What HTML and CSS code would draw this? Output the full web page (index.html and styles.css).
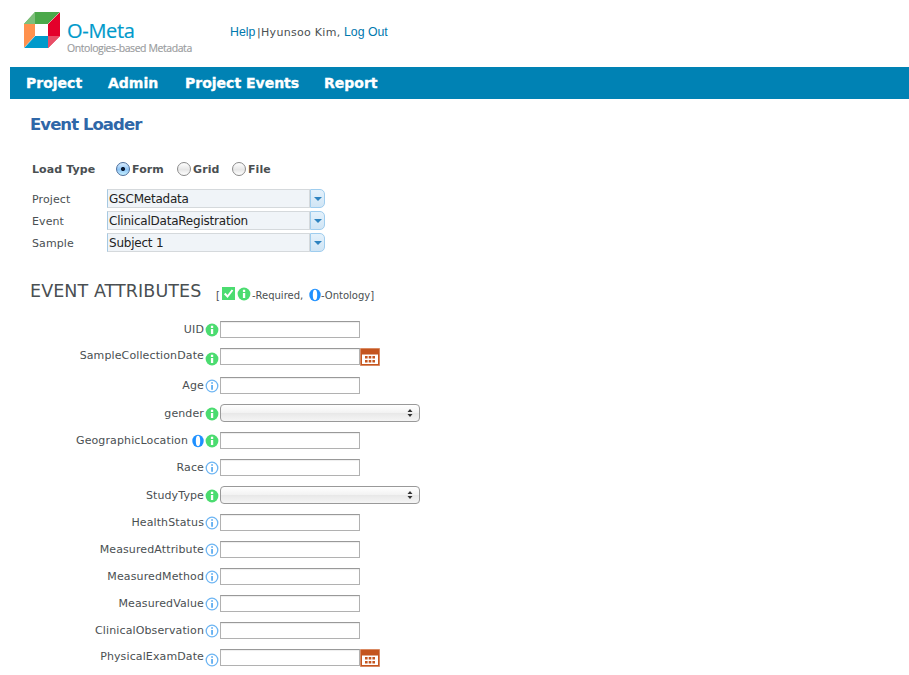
FILE: index.html
```html
<!DOCTYPE html>
<html lang="en">
<head>
<meta charset="utf-8">
<title>O-Meta Event Loader</title>
<link rel="stylesheet" href="styles.css">
</head>
<body>
<svg class="defs" aria-hidden="true">
  <symbol id="req" viewBox="0 0 14 14"><circle cx="7" cy="7" r="6.4" fill="#4bdc70"/><path d="M5.9 2.8h2.3v2.1H5.9zM5.9 6h2.3v5H5.9z" fill="#fff"/></symbol>
  <symbol id="opt" viewBox="0 0 14 14"><circle cx="7" cy="7" r="5.8" fill="#fff" stroke="#6db5f3" stroke-width="1.3"/><path d="M6.2 3.2h1.7v1.5H6.2zM6.2 6h1.7v4.8H6.2z" fill="#55a8f0"/></symbol>
  <symbol id="onto" viewBox="0 0 12 14"><ellipse cx="6" cy="7" rx="5.7" ry="6.2" fill="#1e90ff"/><ellipse cx="6" cy="7" rx="2.2" ry="5.2" fill="#fff"/></symbol>
  <symbol id="cal" viewBox="0 0 20 18"><path d="M.5.5h19v17H.5z" fill="#c4551f" stroke="#d98a63"/><path d="M2 6.5h16V16H2z" fill="#fff"/><path d="M5 8h2.6v2.5H5zM8.7 8h2.6v2.5H8.7zM12.4 8H15v2.5h-2.6zM5 12h2.6v2.5H5zM8.7 12h2.6v2.5H8.7zM12.4 12H15v2.5h-2.6z" fill="#c4551f"/></symbol>
</svg>
<header class="header">
  <svg class="logo" viewBox="0 0 38 38">
    <path d="M1 13 12 1H37L25 13z" fill="#4ba84a"/>
    <path d="M12 1V13H1z" fill="#7dbf7a"/>
    <path d="M1 13H12V25L1 37z" fill="#ff914d"/>
    <path d="M37 1V25L25 37V13z" fill="#e4002b"/>
    <path d="M1 37 12 25H25V37z" fill="#009acb"/>
    <path d="M25 25H37L25 37z" fill="#e84e67"/>
    <path d="M12 13H25V25H12z" fill="#fff"/>
    <path d="M37 1 25 13M12 25 1 37" fill="none" stroke="#fff" stroke-width=".6" opacity=".6"/>
  </svg>
  <div class="brand"><div class="brand-name">O-Meta</div><div class="tagline">Ontologies-based Metadata</div></div>
  <div class="user"><a class="help">Help</a><span class="name">|Hyunsoo Kim, </span><a class="logout">Log Out</a></div>
</header>
<nav class="nav"><a class="n1">Project</a><a class="n2">Admin</a><a class="n3">Project Events</a><a class="n4">Report</a></nav>
<main class="main">
  <h1>Event Loader</h1>
  <div class="load"><span class="load-label">Load Type</span>
    <label class="r1"><i class="radio on"></i>Form</label><label class="r2"><i class="radio"></i>Grid</label><label><i class="radio"></i>File</label></div>
  <div class="combo-row"><span>Project</span><div class="combo"><b>GSCMetadata</b><i></i></div></div>
  <div class="combo-row"><span>Event</span><div class="combo"><b>ClinicalDataRegistration</b><i></i></div></div>
  <div class="combo-row"><span>Sample</span><div class="combo"><b>Subject 1</b><i></i></div></div>
  <div class="section"><h2>EVENT ATTRIBUTES</h2>
    <div class="legend"><span>[</span><svg class="check" viewBox="0 0 13 13"><path d="M0 0h13v13H0z" fill="#4bdc70"/><path d="M2.7 6.5 5.5 9.5 10.5 3" fill="none" stroke="#fff" stroke-width="2"/></svg><svg class="ic lreq"><use href="#req"/></svg><span class="lt">-Required,</span><svg class="onto"><use href="#onto"/></svg><span class="lo">-Ontology]</span></div></div>
  <div class="form">
    <div class="row"><label>UID</label><svg class="ic"><use href="#req"/></svg><input></div>
    <div class="row date tall"><label>SampleCollectionDate</label><svg class="ic"><use href="#req"/></svg><input><svg class="cal"><use href="#cal"/></svg></div>
    <div class="row"><label>Age</label><svg class="ic"><use href="#opt"/></svg><input></div>
    <div class="row sel"><label>gender</label><svg class="ic"><use href="#req"/></svg><div class="select"><svg viewBox="0 0 6 8"><path d="M3 0 5.5 3H.5zM3 8 5.5 5H.5z" fill="#333"/></svg></div></div>
    <div class="row"><label>GeographicLocation</label><svg class="onto"><use href="#onto"/></svg><svg class="ic"><use href="#req"/></svg><input></div>
    <div class="row"><label>Race</label><svg class="ic"><use href="#opt"/></svg><input></div>
    <div class="row sel"><label>StudyType</label><svg class="ic"><use href="#req"/></svg><div class="select"><svg viewBox="0 0 6 8"><path d="M3 0 5.5 3H.5zM3 8 5.5 5H.5z" fill="#333"/></svg></div></div>
    <div class="row"><label>HealthStatus</label><svg class="ic"><use href="#opt"/></svg><input></div>
    <div class="row"><label>MeasuredAttribute</label><svg class="ic"><use href="#opt"/></svg><input></div>
    <div class="row"><label>MeasuredMethod</label><svg class="ic"><use href="#opt"/></svg><input></div>
    <div class="row"><label>MeasuredValue</label><svg class="ic"><use href="#opt"/></svg><input></div>
    <div class="row"><label>ClinicalObservation</label><svg class="ic"><use href="#opt"/></svg><input></div>
    <div class="row date"><label>PhysicalExamDate</label><svg class="ic"><use href="#opt"/></svg><input><svg class="cal"><use href="#cal"/></svg></div>
  </div>
</main>
</body>
</html>
```
FILE: styles.css
```css
* { box-sizing: border-box; }
body { margin: 0; height: 675px; overflow: hidden; background: #fff; color: #4a4f52; font: 11px "DejaVu Sans", Verdana, sans-serif; }
.defs { display: none; }
svg { flex: none; display: block; }
.header { display: flex; height: 67px; padding-left: 23px; }
.logo { width: 38px; height: 38px; margin-top: 11px; }
.brand { width: 163px; padding: 20px 0 0 6px; white-space: nowrap; font-family: "Open Sans", sans-serif; }
.brand-name { color: #009acb; font-size: 20px; line-height: 22px; letter-spacing: -.3px; -webkit-text-stroke: .2px; }
.tagline { color: #9a9c9e; font-size: 10.5px; line-height: 13px; letter-spacing: -.42px; -webkit-text-stroke: .15px; }
.user { display: flex; padding: 24px 0 0 6px; line-height: 17px; white-space: pre; }
.user a { color: #0078ae; font: 12.3px/16px "Liberation Sans", Arial, sans-serif; }
.help { width: 27px; }
.name { width: 87px; letter-spacing: .3px; }
.nav { display: flex; height: 32px; margin-left: 10px; padding-left: 16px; background: #0082b4; color: #fff; font: bold 14px/32px "DejaVu Sans", sans-serif; white-space: nowrap; -webkit-text-stroke: .35px #fff; }
.n1 { width: 82px; }
.n2 { width: 77px; }
.n3 { width: 139px; }
.main { padding-left: 30px; }
h1 { margin: 0; height: 61px; padding-top: 15px; color: #2f67a8; font: bold 16.5px/22px "DejaVu Sans", sans-serif; letter-spacing: -.95px; }
.load { display: flex; align-items: center; height: 18px; padding-left: 2px; font-weight: bold; letter-spacing: .1px; }
.load-label { width: 84px; }
.load label { display: flex; align-items: center; gap: 2px; width: 55px; }
.load .r1 { width: 61px; }
.radio { flex: none; width: 14px; height: 14px; border: 1px solid #8b8b8b; border-radius: 50%; background: linear-gradient(#fff, #e6e6e6 55%, #fff); }
.radio.on { border-color: #4d6f9d; background: radial-gradient(circle, #0b1b35 0 1.7px, transparent 2.4px), linear-gradient(#d9edff, #8ec4f5 55%, #c5f0ff); }
.combo-row { display: flex; height: 22px; padding-left: 2px; line-height: 21px; letter-spacing: .1px; }
.load + .combo-row { margin-top: 11px; }
.combo-row > span { width: 75px; }
.combo { display: flex; width: 218px; height: 19px; }
.combo b { width: 203px; padding-left: 1px; border: 1px solid #d5d9dc; border-left-color: #a6c9e2; background: #f0f4f8; color: #222; font: 12px/18px "DejaVu Sans", sans-serif; letter-spacing: -.22px; }
.combo > i { display: flex; align-items: center; justify-content: center; width: 15px; border: 1px solid #9fcdee; border-radius: 0 5px 5px 0; background: linear-gradient(#e4f1fb, #d0e5f5); }
.combo > i::before { content: ""; border: 4px solid transparent; border-top-color: #2e83c0; border-bottom: 0; }
.section { display: flex; height: 66px; padding-top: 23px; }
h2 { margin: 0; width: 186px; font: 17.5px/26px "DejaVu Sans", sans-serif; letter-spacing: .08px; white-space: nowrap; }
.legend { display: flex; height: 18px; margin-top: 9px; font-size: 10px; line-height: 17px; }
.check { width: 13px; height: 13px; margin: 0 2px 0 2px; }
.lreq { margin-right: 1px; }
.lt { width: 57px; }
.legend .onto { margin-top: 1px; }
.row { display: flex; height: 27px; }
.row label { width: 174px; text-align: right; line-height: 18px; letter-spacing: .12px; }
.row:has(.onto) label { width: 158px; margin-right: 4px; }
.ic { width: 14px; height: 14px; }
.row .ic { margin: 2px 1px 0 1px; }
.onto { width: 12px; height: 14px; }
.row .onto { margin-top: 2px; }
.row input { width: 140px; height: 17px; padding: 0; border: 1px solid #b1b1b1; border-top-color: #999; background: #fff; box-shadow: inset 0 1px 1px #eee; }
.row .onto + .ic { margin-left: 1px; }
.date.tall { height: 29px; }
.date label { line-height: 15px; }
.date .ic { margin-top: 4px; }
.cal { width: 20px; height: 18px; }
.row.sel { height: 28px; }
.sel .ic { margin-top: 3px; }
.sel label { line-height: 19px; }
.select { display: flex; justify-content: flex-end; align-items: center; width: 200px; height: 18px; padding-right: 6px; border: 1px solid #999; border-radius: 4px; background: linear-gradient(#fff, #f2f2f2 50%, #e8e8e8 52%, #f5f5f5); }
.select svg { width: 6px; height: 8px; }
```
